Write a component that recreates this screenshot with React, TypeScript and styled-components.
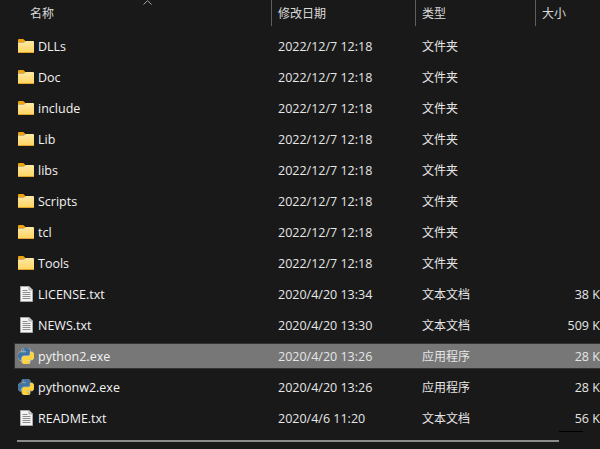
import React from 'react';
import styled, { createGlobalStyle } from 'styled-components';

type FileKind = 'folder' | 'text' | 'python';

interface FileEntry {
  name: string;
  date: string;
  type: string;
  size?: string;
  kind: FileKind;
  selected?: boolean;
}

const files: FileEntry[] = [
  { name: 'DLLs', date: '2022/12/7 12:18', type: '文件夹', kind: 'folder' },
  { name: 'Doc', date: '2022/12/7 12:18', type: '文件夹', kind: 'folder' },
  { name: 'include', date: '2022/12/7 12:18', type: '文件夹', kind: 'folder' },
  { name: 'Lib', date: '2022/12/7 12:18', type: '文件夹', kind: 'folder' },
  { name: 'libs', date: '2022/12/7 12:18', type: '文件夹', kind: 'folder' },
  { name: 'Scripts', date: '2022/12/7 12:18', type: '文件夹', kind: 'folder' },
  { name: 'tcl', date: '2022/12/7 12:18', type: '文件夹', kind: 'folder' },
  { name: 'Tools', date: '2022/12/7 12:18', type: '文件夹', kind: 'folder' },
  { name: 'LICENSE.txt', date: '2020/4/20 13:34', type: '文本文档', size: '38 KB', kind: 'text' },
  { name: 'NEWS.txt', date: '2020/4/20 13:30', type: '文本文档', size: '509 KB', kind: 'text' },
  { name: 'python2.exe', date: '2020/4/20 13:26', type: '应用程序', size: '28 KB', kind: 'python', selected: true },
  { name: 'pythonw2.exe', date: '2020/4/20 13:26', type: '应用程序', size: '28 KB', kind: 'python' },
  { name: 'README.txt', date: '2020/4/6 11:20', type: '文本文档', size: '56 KB', kind: 'text' },
];

const GlobalStyle = createGlobalStyle`
  html, body {
    margin: 0;
    padding: 0;
    background: #191919;
  }
`;

const Window = styled.div`
  position: relative;
  width: 600px;
  height: 449px;
  overflow: hidden;
  background: #191919;
  color: #f2f2f2;
  font-family: "Open Sans", "Noto Sans CJK SC", sans-serif;
  font-size: 12.5px;
`;

const HeaderRow = styled.div`
  display: grid;
  grid-template-columns: 272px 144px 120px 64px;
  height: 26px;
`;

const HeaderCell = styled.div<{ $first?: boolean; $divided?: boolean }>`
  display: flex;
  align-items: center;
  height: 26px;
  box-sizing: border-box;
  padding-left: ${(p) => (p.$first ? '30px' : '6px')};
  padding-bottom: 1px;
  border-right: ${(p) => (p.$divided ? '1px solid #5f5f5f' : 'none')};
  color: #d9d9d9;
  font-family: "Noto Sans CJK SC", sans-serif;
  font-size: 12px;
`;

const SortArrow = styled.svg`
  position: absolute;
  left: 143px;
  top: 0;
`;

const FileList = styled.div`
  display: flex;
  flex-direction: column;
  gap: 5px;
  padding-top: 7px;
`;

const Row = styled.div<{ $selected?: boolean }>`
  display: grid;
  grid-template-columns: ${(p) => (p.$selected ? '257px' : '272px')} 144px 120px 80px;
  align-items: center;
  height: 26px;
  box-sizing: border-box;
  margin-left: ${(p) => (p.$selected ? '14px' : '0')};
  margin-right: -16px;
  background: ${(p) => (p.$selected ? '#777777' : 'transparent')};
  border: ${(p) => (p.$selected ? '1px solid #333333' : 'none')};
  border-right: none;
`;

const NameCell = styled.div<{ $selected?: boolean }>`
  display: flex;
  align-items: center;
  gap: 4px;
  padding-left: ${(p) => (p.$selected ? '3px' : '18px')};
`;

const IconBox = styled.span`
  display: flex;
  align-items: center;
  justify-content: center;
  width: 16px;
  height: 16px;
`;

const FileName = styled.span`
  white-space: nowrap;
`;

const DateCell = styled.div`
  padding-left: 6px;
  white-space: nowrap;
  color: #e6e6e6;
`;

const TypeCell = styled.div`
  padding-left: 6px;
  padding-bottom: 1px;
  color: #e6e6e6;
  font-family: "Noto Sans CJK SC", sans-serif;
  font-size: 12px;
`;

const SizeCell = styled.div`
  text-align: right;
  padding-right: 8px;
  white-space: nowrap;
  color: #e6e6e6;
`;

const ScrollTrack = styled.div`
  position: relative;
  height: 2px;
  margin-top: 9px;
  padding-left: 17px;
`;

const ScrollThumb = styled.div`
  width: 542px;
  height: 2px;
  background: #8b8b8b;
`;

const Notch = styled.div`
  position: absolute;
  left: 559px;
  top: -9px;
  width: 24px;
  height: 1px;
  background: #000;
`;

const FolderIcon = () => (
  <svg width="16" height="14" viewBox="0 0 16 14">
    <defs>
      <linearGradient id="folderFace" x1="0" y1="0" x2="0" y2="1">
        <stop offset="0" stopColor="#ffe9a6" />
        <stop offset="1" stopColor="#ffd35f" />
      </linearGradient>
    </defs>
    <path d="M0 2V1a1 1 0 0 1 1-1h4.200L7 1.500V3H0z" fill="#f0a30a" />
    <path d="M0 3.200h6.200L7.600 2H15a1 1 0 0 1 1 1v10a1 1 0 0 1-1 1H1a1 1 0 0 1-1-1z" fill="url(#folderFace)" />
    <path d="M0 13h16a1 1 0 0 1-1 1H1a1 1 0 0 1-1-1z" fill="#e2a52c" />
  </svg>
);

const TextIcon = () => (
  <svg width="13" height="16" viewBox="0 0 13 16">
    <path d="M.5.5h8.500l3.500 3.500v11.500H.5z" fill="#f4f4f4" stroke="#a8a8a8" />
    <path d="M9 .5v3.500h3.500" fill="#d9d9d9" stroke="#a8a8a8" />
    <path d="M2.500 4.500h5M2.500 6.500h8M2.500 8.500h8M2.500 10.500h8M2.500 12.500h8" stroke="#8c8c8c" />
  </svg>
);

const PythonIcon = () => (
  <svg width="16" height="16" viewBox="0 0 24 24">
    <path
      fill="#3f74a3"
      stroke="#ffffff"
      strokeWidth="1.100"
      paintOrder="stroke"
      d="M14.250.18l.9.2.73.26.59.3.45.32.34.34.25.34.16.33.1.3.04.26.02.2-.01.13V8.500l-.05.63-.13.55-.21.46-.26.38-.3.31-.33.25-.35.19-.35.14-.33.1-.3.07-.26.04-.21.02H8.770l-.69.05-.59.14-.5.22-.41.27-.33.32-.27.35-.2.36-.15.37-.1.35-.07.32-.04.27-.02.21v3.060H3.170l-.21-.03-.28-.07-.32-.12-.35-.18-.36-.26-.36-.36-.35-.46-.32-.59-.28-.73-.21-.88-.14-1.050-.05-1.230.06-1.220.16-1.040.24-.87.32-.71.36-.57.4-.44.42-.33.42-.24.4-.16.36-.1.32-.05.24-.01h.16l.06.01h8.160v-.83H6.180l-.01-2.750-.02-.37.05-.34.11-.31.17-.28.25-.26.31-.23.38-.2.44-.18.51-.15.58-.12.64-.1.71-.06.77-.04.84-.02 1.270.05zm-6.300 1.980l-.23.33-.08.41.08.41.23.34.33.22.41.09.41-.09.33-.22.23-.34.08-.41-.08-.41-.23-.33-.33-.22-.41-.09-.41.09z"
    />
    <path
      fill="#ffd43b"
      stroke="#ffffff"
      strokeWidth="1.100"
      paintOrder="stroke"
      d="M21.040 6.110l.28.06.32.12.35.18.36.27.36.35.35.47.32.59.28.73.21.88.14 1.040.05 1.230-.06 1.230-.16 1.040-.24.86-.32.71-.36.57-.4.45-.42.33-.42.24-.4.16-.36.09-.32.05-.24.02-.16-.01h-8.220v.82h5.840l.01 2.760.02.36-.05.34-.11.31-.17.29-.25.25-.31.24-.38.2-.44.17-.51.15-.58.13-.64.09-.71.07-.77.04-.84.01-1.270-.04-1.070-.14-.9-.2-.73-.25-.59-.3-.45-.33-.34-.34-.25-.34-.16-.33-.1-.3-.04-.25-.02-.2.01-.13v-5.340l.05-.64.13-.54.21-.46.26-.38.3-.32.33-.24.35-.2.35-.14.33-.1.3-.06.26-.04.21-.02.13-.01h5.840l.69-.05.59-.14.5-.21.41-.28.33-.32.27-.35.2-.36.15-.36.1-.35.07-.32.04-.28.02-.21V6.070h2.090l.14.01zm-6.470 14.250l-.23.33-.08.41.08.41.23.33.33.23.41.08.41-.08.33-.23.23-.33.08-.41-.08-.41-.23-.33-.33-.23-.41-.08-.41.08z"
    />
  </svg>
);

const icons: Record<FileKind, React.ReactNode> = {
  folder: <FolderIcon />,
  text: <TextIcon />,
  python: <PythonIcon />,
};

export default function App() {
  return (
    <Window>
      <GlobalStyle />
      <HeaderRow>
        <HeaderCell $first $divided>名称</HeaderCell>
        <HeaderCell $divided>修改日期</HeaderCell>
        <HeaderCell $divided>类型</HeaderCell>
        <HeaderCell>大小</HeaderCell>
      </HeaderRow>
      <SortArrow width="9" height="5" viewBox="0 0 9 5">
        <path d="M.5 4.500L4.500.7l4 3.800" fill="none" stroke="#a6a6a6" />
      </SortArrow>
      <FileList>
        {files.map((file) => (
          <Row key={file.name} $selected={file.selected}>
            <NameCell $selected={file.selected}>
              <IconBox>{icons[file.kind]}</IconBox>
              <FileName>{file.name}</FileName>
            </NameCell>
            <DateCell>{file.date}</DateCell>
            <TypeCell>{file.type}</TypeCell>
            <SizeCell>{file.size}</SizeCell>
          </Row>
        ))}
      </FileList>
      <ScrollTrack>
        <ScrollThumb />
        <Notch />
      </ScrollTrack>
    </Window>
  );
}
